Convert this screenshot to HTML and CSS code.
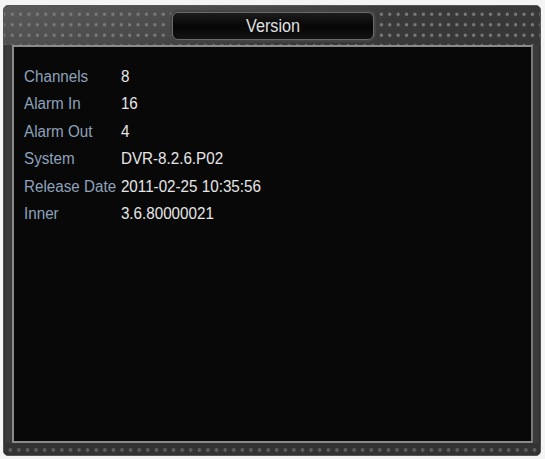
FILE: index.html
```html
<!DOCTYPE html>
<html>
<head>
<meta charset="utf-8">
<link rel="stylesheet" href="styles.css">
</head>
<body>
<div class="frame">
  <div class="header">
    <div class="title"><span class="title-text">Version</span></div>
  </div>
  <div class="panel">
    <div class="info">
      <div class="label">Channels</div><div class="value">8</div>
      <div class="label">Alarm In</div><div class="value">16</div>
      <div class="label">Alarm Out</div><div class="value">4</div>
      <div class="label">System</div><div class="value">DVR-8.2.6.P02</div>
      <div class="label">Release Date</div><div class="value">2011-02-25 10:35:56</div>
      <div class="label">Inner</div><div class="value">3.6.80000021</div>
    </div>
  </div>
  <div class="footer"></div>
</div>
</body>
</html>
```
FILE: styles.css
```css
html, body {
  margin: 0;
  padding: 0;
  background: #f4f4f4;
}
body {
  width: 545px;
  height: 459px;
  overflow: hidden;
  font-family: "Liberation Sans", Arial, sans-serif;
}
.frame {
  margin: 5px 4px 0 3px;
  width: 538px;
  height: 451px;
  box-sizing: border-box;
  background: #3a3a3a;
  border-radius: 5px;
  border: 1px solid #555;
  display: flex;
  flex-direction: column;
  box-shadow: inset 0 0 0 1px #2a2a2a;
}
.header {
  height: 39px;
  flex: none;
  display: flex;
  justify-content: center;
  align-items: flex-start;
  padding-top: 6px;
  box-sizing: border-box;
  background:
    radial-gradient(circle, #7a7a7a 0 1.4px, transparent 2px) 4px 3px / 8.4px 10.5px,
    linear-gradient(165deg, #5a5a5a 0%, #4a4a4a 35%, #3a3a3a 60%, #363636 100%);
  border-radius: 4px 4px 0 0;
}
.title {
  width: 202px;
  height: 28px;
  margin-left: 2px;
  box-sizing: border-box;
  border: 1px solid #6a6a6a;
  border-radius: 6px;
  background: linear-gradient(to bottom, #1c1c1c 0%, #060606 50%, #121212 100%);
  box-shadow: 0 0 0 2px #444;
  color: #e0e0e0;
  font-size: 18px;
  line-height: 26px;
  text-align: center;
}
.title-text {
  display: inline-block;
  transform: scaleX(0.9);
}
.panel {
  flex: 1;
  margin: 0 7px 0 8px;
  background: #080808;
  border: 2px solid #8a8a8a;
  border-right-color: #777;
  padding: 20px 0 0 10px;
}
.info {
  display: grid;
  grid-template-columns: 102px auto;
  row-gap: 8.4px;
  font-size: 16px;
  line-height: 19px;
  white-space: nowrap;
  transform: scaleX(0.95);
  transform-origin: left top;
}
.label {
  color: #8ea2bc;
}
.value {
  color: #e6e6e6;
}
.footer {
  height: 12px;
  flex: none;
  background:
    radial-gradient(circle, #5e5e5e 0 1.5px, transparent 2.2px) 2px 1px / 8.6px 12px,
    #333;
  border-radius: 0 0 4px 4px;
}
```
